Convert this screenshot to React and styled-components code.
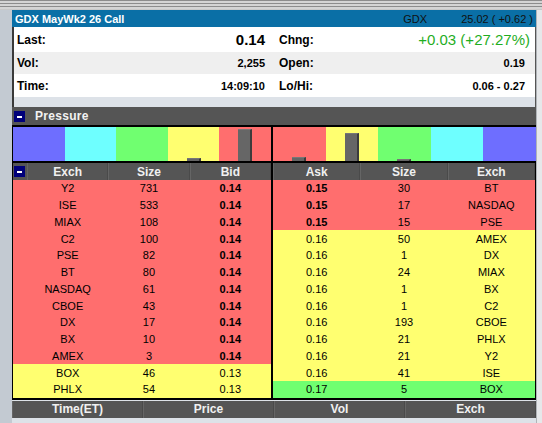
import React from "react";
import styled, { createGlobalStyle } from "styled-components";

const GlobalStyle = createGlobalStyle`
  html, body { margin: 0; padding: 0; }
  body {
    background: #e4e7ea;
    font-family: "Liberation Sans", Arial, sans-serif;
    width: 542px;
    height: 423px;
    overflow: hidden;
  }
`;

const bids = [
  ["Y2", "731", "0.14", "red"],
  ["ISE", "533", "0.14", "red"],
  ["MIAX", "108", "0.14", "red"],
  ["C2", "100", "0.14", "red"],
  ["PSE", "82", "0.14", "red"],
  ["BT", "80", "0.14", "red"],
  ["NASDAQ", "61", "0.14", "red"],
  ["CBOE", "43", "0.14", "red"],
  ["DX", "17", "0.14", "red"],
  ["BX", "10", "0.14", "red"],
  ["AMEX", "3", "0.14", "red"],
  ["BOX", "46", "0.13", "yellow"],
  ["PHLX", "54", "0.13", "yellow"],
];

const asks = [
  ["0.15", "30", "BT", "red"],
  ["0.15", "17", "NASDAQ", "red"],
  ["0.15", "15", "PSE", "red"],
  ["0.16", "50", "AMEX", "yellow"],
  ["0.16", "1", "DX", "yellow"],
  ["0.16", "24", "MIAX", "yellow"],
  ["0.16", "1", "BX", "yellow"],
  ["0.16", "1", "C2", "yellow"],
  ["0.16", "193", "CBOE", "yellow"],
  ["0.16", "21", "PHLX", "yellow"],
  ["0.16", "21", "Y2", "yellow"],
  ["0.16", "41", "ISE", "yellow"],
  ["0.17", "5", "BOX", "green"],
];

const colors = {
  blue: "#6e6eff",
  cyan: "#6effff",
  green: "#70ff70",
  yellow: "#ffff70",
  red: "#ff6e6e",
};

const bidPressure = [
  ["blue", 0],
  ["cyan", 0],
  ["green", 0],
  ["yellow", 2],
  ["red", 31],
];
const askPressure = [
  ["red", 3],
  ["yellow", 27],
  ["green", 1],
  ["cyan", 0],
  ["blue", 0],
];

export default function App() {
  return (
    <>
      <GlobalStyle />
      <Stripes />
      <Layout>
        <LeftStrip />
        <Panel>
          <TitleBar>
            <Title>GDX MayWk2 26 Call</Title>
            <Under>GDX</Under>
            <UnderPrice>25.02 ( +0.62 )</UnderPrice>
          </TitleBar>
          <Info>
            <InfoRow>
              <Cell>
                <Label>Last:</Label>
                <BigValue>0.14</BigValue>
              </Cell>
              <Cell>
                <Label>Chng:</Label>
                <ChangeValue>+0.03 (+27.27%)</ChangeValue>
              </Cell>
            </InfoRow>
            <InfoRow $shade $h={22}>
              <Cell>
                <Label>Vol:</Label>
                <Value>2,255</Value>
              </Cell>
              <Cell>
                <Label>Open:</Label>
                <Value $pad>0.19</Value>
              </Cell>
            </InfoRow>
            <InfoRow $h={23}>
              <Cell>
                <Label>Time:</Label>
                <Value>14:09:10</Value>
              </Cell>
              <Cell>
                <Label>Lo/Hi:</Label>
                <Value $pad>0.06 - 0.27</Value>
              </Cell>
            </InfoRow>
            <Spacer />
          </Info>
          <SectionBar>
            <MinusButton />
            <SectionTitle>Pressure</SectionTitle>
          </SectionBar>
          <Chart>
            <ChartHalf>
              {bidPressure.map(([c, h], i) => (
                <Segment key={i} $color={colors[c]}>
                  {h > 0 && <Bar style={{ height: h }} />}
                </Segment>
              ))}
            </ChartHalf>
            <Divider />
            <ChartHalf>
              {askPressure.map(([c, h], i) => (
                <Segment key={i} $color={colors[c]}>
                  {h > 0 && <Bar style={{ height: h }} />}
                </Segment>
              ))}
            </ChartHalf>
          </Chart>
          <Book>
            <BookSide>
              <HeadRow $left>
                <HeadCorner>
                  <MinusButton />
                </HeadCorner>
                <HeadCell>Exch</HeadCell>
                <HeadCell>Size</HeadCell>
                <HeadCell>Bid</HeadCell>
              </HeadRow>
              {bids.map(([ex, size, px, c], i) => (
                <DataRow key={i} $left $color={colors[c]}>
                  <span />
                  <DataCell>{ex}</DataCell>
                  <DataCell>{size}</DataCell>
                  <DataCell $bold={c === "red"}>{px}</DataCell>
                </DataRow>
              ))}
            </BookSide>
            <Divider />
            <BookSide>
              <HeadRow>
                <HeadCell>Ask</HeadCell>
                <HeadCell>Size</HeadCell>
                <HeadCell>Exch</HeadCell>
              </HeadRow>
              {asks.map(([px, size, ex, c], i) => (
                <DataRow key={i} $color={colors[c]}>
                  <DataCell $bold={c === "red"}>{px}</DataCell>
                  <DataCell>{size}</DataCell>
                  <DataCell>{ex}</DataCell>
                </DataRow>
              ))}
            </BookSide>
          </Book>
          <TradesHead>
            <HeadCell>Time(ET)</HeadCell>
            <HeadCell>Price</HeadCell>
            <HeadCell>Vol</HeadCell>
            <HeadCell>Exch</HeadCell>
          </TradesHead>
        </Panel>
        <RightStrip />
      </Layout>
    </>
  );
}

const Stripes = styled.div`
  height: 10px;
  background: repeating-linear-gradient(
    to bottom,
    #8c8c8c 0px,
    #8c8c8c 1px,
    #d4d4d4 1px,
    #d4d4d4 3px
  );
  border-bottom: 1px solid #c8c8c8;
  box-sizing: border-box;
`;

const Layout = styled.div`
  display: flex;
  height: 413px;
`;

const LeftStrip = styled.div`
  width: 12px;
  background: #c3cad2;
`;

const RightStrip = styled.div`
  flex: 1;
  background: #e6e8ea;
  border-left: 1px solid #b0b4b8;
`;

const Panel = styled.div`
  width: 524px;
  display: flex;
  flex-direction: column;
  background: #dde2e8;
`;

const TitleBar = styled.div`
  height: 17px;
  background: #0a6fa6;
  display: flex;
  align-items: center;
  padding: 0 3px 0 3px;
  font-size: 11px;
`;

const Title = styled.div`
  color: #fff;
  font-weight: bold;
  flex: 1;
`;

const Under = styled.div`
  color: #111;
  width: 58px;
`;

const UnderPrice = styled.div`
  color: #111;
`;

const Info = styled.div`
  border-left: 2px solid #3a3a3a;
  border-right: 1px solid #555;
  display: flex;
  flex-direction: column;
`;

const InfoRow = styled.div`
  height: ${(p) => p.$h || 25}px;
  background: ${(p) => (p.$shade ? "#efefef" : "#fff")};
  display: grid;
  grid-template-columns: 259px 1fr;
`;

const Cell = styled.div`
  display: flex;
  align-items: center;
  justify-content: space-between;
  padding: 0 8px 0 3px;
  &:last-child {
    padding: 0 5px 0 6px;
  }
`;

const Label = styled.span`
  font-size: 12px;
  font-weight: bold;
  color: #000;
`;

const BigValue = styled.span`
  font-size: 15px;
  font-weight: bold;
  color: #000;
`;

const ChangeValue = styled.span`
  font-size: 15px;
  color: #1fae1f;
`;

const Value = styled.span`
  font-size: 11px;
  font-weight: bold;
  color: #000;
  padding-right: ${(p) => (p.$pad ? 5 : 0)}px;
`;

const Spacer = styled.div`
  height: 10px;
  background: #dde2e8;
`;

const SectionBar = styled.div`
  height: 18px;
  background: #555;
  display: flex;
  align-items: center;
  padding-left: 2px;
`;

const MinusButton = styled.div`
  width: 11px;
  height: 11px;
  background: #00007a;
  position: relative;
  flex-shrink: 0;
  &::after {
    content: "";
    position: absolute;
    left: 3px;
    right: 3px;
    top: 5px;
    height: 2px;
    background: #fff;
  }
`;

const SectionTitle = styled.span`
  color: #f2f2f2;
  font-weight: bold;
  font-size: 12px;
  margin-left: 10px;
  letter-spacing: 0.3px;
`;

const Chart = styled.div`
  height: 34px;
  border-top: 2px solid #000;
  border-bottom: 2px solid #000;
  border-left: 1px solid #000;
  display: grid;
  grid-template-columns: 258px 2px 1fr;
`;

const ChartHalf = styled.div`
  display: grid;
  grid-template-columns: repeat(5, 1fr);
`;

const Segment = styled.div`
  background: ${(p) => p.$color};
  display: flex;
  align-items: flex-end;
  justify-content: center;
`;

const Bar = styled.div`
  width: 12px;
  background: #666;
  border-right: 2px solid #3c3c3c;
  border-top: 1px solid #777;
`;

const Divider = styled.div`
  background: #000;
`;

const Book = styled.div`
  display: grid;
  grid-template-columns: 258px 2px 1fr;
  border-left: 1px solid #000;
  border-bottom: 2px solid #000;
  border-right: 1px solid #000;
`;

const BookSide = styled.div`
  display: flex;
  flex-direction: column;
`;

const HeadRow = styled.div`
  height: 17px;
  background: #555;
  display: grid;
  grid-template-columns: ${(p) => (p.$left ? "14px repeat(3, 1fr)" : "repeat(3, 1fr)")};
`;

const HeadCorner = styled.div`
  display: flex;
  align-items: center;
  padding-left: 1px;
`;

const HeadCell = styled.div`
  color: #f0f0f0;
  font-weight: bold;
  font-size: 12px;
  display: flex;
  align-items: center;
  justify-content: center;
  border-left: 1px solid #656565;
  border-right: 1px solid #4a4a4a;
`;

const DataRow = styled.div`
  height: 16.75px;
  background: ${(p) => p.$color};
  display: grid;
  grid-template-columns: ${(p) => (p.$left ? "14px repeat(3, 1fr)" : "repeat(3, 1fr)")};
`;

const DataCell = styled.div`
  font-size: 11px;
  color: #000;
  font-weight: ${(p) => (p.$bold ? "bold" : "normal")};
  display: flex;
  align-items: center;
  justify-content: center;
`;

const TradesHead = styled.div`
  margin-top: 1px;
  height: 17px;
  background: #555;
  display: grid;
  grid-template-columns: repeat(4, 1fr);
`;
